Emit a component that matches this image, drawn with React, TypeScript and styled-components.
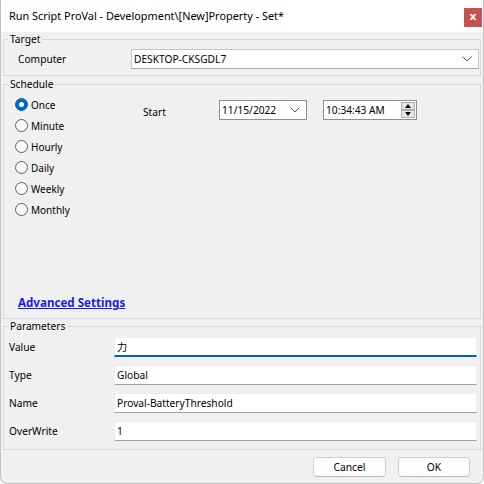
import React from 'react';
import styled, { createGlobalStyle } from 'styled-components';

const Global = createGlobalStyle`
  html, body { margin: 0; padding: 0; background: #ffffff; }
  body { font-family: "Noto Sans", "Segoe UI", sans-serif; font-size: 10.2px; color: #000; }
  * { box-sizing: border-box; }
`;

const Window = styled.div`
  width: 484px;
  height: 484px;
  display: flex;
  flex-direction: column;
  background: #f0f0f0;
  border: 1px solid #c2c2c2;
  border-top: none;
  border-radius: 0 0 7px 7px;
  overflow: hidden;
`;

const TitleBar = styled.div`
  height: 32px;
  flex: none;
  background: #ffffff;
  display: flex;
  align-items: center;
  justify-content: space-between;
  padding-left: 8px;
  padding-right: 1px;
`;

const Title = styled.span`
  font-size: 10.9px;
  line-height: 16px;
  color: #000;
`;

const CloseButton = styled.div`
  width: 18px;
  height: 19px;
  margin-top: 3px;
  background: #c75050;
  color: #fff;
  font-weight: bold;
  font-size: 11px;
  line-height: 17px;
  text-align: center;
  font-family: "DejaVu Sans", sans-serif;
`;

const Body = styled.div`
  flex: 1;
  display: flex;
  flex-direction: column;
  padding: 0 2px;
`;

const Group = styled.fieldset<{ $h: number; $mt?: number }>`
  margin: ${p => p.$mt ?? 0}px 0 0 0;
  padding: 0;
  border: 1px solid #d9d9d9;
  height: ${p => p.$h}px;
  min-width: 0;
  flex: none;
`;

const Legend = styled.legend`
  margin-left: 4px;
  padding: 0 2px;
  font-size: 10.2px;
  line-height: 14px;
  color: #000;
`;

const TargetRow = styled.div`
  display: grid;
  grid-template-columns: 113px 1fr;
  align-items: center;
  padding: 3px 1px 0 14px;
`;

const FieldLabel = styled.span`
  font-size: 10.2px;
  line-height: 16px;
`;

const Combo = styled.div`
  height: 20px;
  background: #fff;
  border: 1px solid #c4c4c4;
  border-bottom-color: #a9a9a9;
  display: flex;
  align-items: center;
  justify-content: space-between;
  padding: 0 6px 0 2px;
  font-size: 10.2px;
`;

const Chevron = () => (
  <svg width="10" height="6" viewBox="0 0 10 6">
    <polyline points="0.5,0.5 5,5 9.5,0.5" fill="none" stroke="#555" strokeWidth="1" />
  </svg>
);

const ScheduleInner = styled.div<{ $h: number }>`
  height: ${p => p.$h}px;
  display: flex;
  flex-direction: column;
  padding: 3px 0 7px 11px;
`;

const ScheduleTop = styled.div`
  display: flex;
  align-items: flex-start;
`;

const RadioList = styled.div`
  width: 128px;
  display: flex;
  flex-direction: column;
`;

const RadioRow = styled.label`
  height: 21px;
  display: flex;
  align-items: center;
  gap: 3px;
  font-size: 10px;
`;

const RadioDot = styled.span<{ $on?: boolean }>`
  width: 13px;
  height: 13px;
  border-radius: 50%;
  flex: none;
  display: flex;
  align-items: center;
  justify-content: center;
  background: ${p => (p.$on ? '#0067c0' : '#f8f8f8')};
  border: 1px solid ${p => (p.$on ? '#0067c0' : '#5f5f5f')};
  &::after {
    content: '';
    display: ${p => (p.$on ? 'block' : 'none')};
    width: 5px;
    height: 5px;
    border-radius: 50%;
    background: #fff;
  }
`;

const StartLabel = styled.span`
  width: 76px;
  margin-top: 10px;
  font-size: 10.2px;
  line-height: 16px;
`;

const Picker = styled.div<{ $w: number; $ml?: number }>`
  width: ${p => p.$w}px;
  margin-left: ${p => p.$ml ?? 0}px;
  margin-top: 6px;
  height: 20px;
  background: #fff;
  border: 1px solid #8f8f8f;
  display: flex;
  align-items: center;
  justify-content: space-between;
  padding: 0 6px 0 2px;
  font-size: 10.2px;
`;

const Spinner = styled.div`
  display: flex;
  flex-direction: column;
  margin-right: -5px;
`;

const SpinButton = styled.div`
  width: 14px;
  height: 8px;
  background: #e6e6e6;
  border: 1px solid #adadad;
  display: flex;
  align-items: center;
  justify-content: center;
`;

const Advanced = styled.a`
  margin-top: auto;
  margin-left: 3px;
  font-weight: bold;
  font-size: 11.6px;
  line-height: 16px;
  color: #1a1aee;
  text-decoration: underline;
  cursor: pointer;
`;

const ParamGrid = styled.div`
  display: grid;
  grid-template-columns: 105px 1fr;
  row-gap: 8px;
  align-items: center;
  padding: 4px 3px 0 5px;
`;

const TextBox = styled.div<{ $focus?: boolean }>`
  height: 20px;
  background: #fff;
  border: 1px solid #ececec;
  border-bottom: ${p => (p.$focus ? '2px solid #005fb8' : '1px solid #a0a0a0')};
  display: flex;
  align-items: center;
  padding: 0 2px;
  font-size: 10.2px;
  font-family: "Noto Sans", "Noto Sans CJK JP", sans-serif;
`;

const Footer = styled.div`
  flex: 1;
  display: flex;
  justify-content: flex-end;
  align-items: flex-start;
  gap: 12px;
  padding: 7px 11px 0 0;
`;

const Button = styled.div<{ $w: number }>`
  width: ${p => p.$w}px;
  height: 20px;
  background: #fdfdfd;
  border: 1px solid #d0d0d0;
  border-bottom-color: #b9b9b9;
  border-radius: 4px;
  display: flex;
  align-items: center;
  justify-content: center;
  font-size: 10.3px;
`;

const radios = ['Once', 'Minute', 'Hourly', 'Daily', 'Weekly', 'Monthly'];
const params: { label: string; value: string; focus?: boolean }[] = [
  { label: 'Value', value: '力', focus: true },
  { label: 'Type', value: 'Global' },
  { label: 'Name', value: 'Proval-BatteryThreshold' },
  { label: 'OverWrite', value: '1' },
];

export default function App() {
  return (
    <>
      <Global />
      <Window>
        <TitleBar>
          <Title>Run Script ProVal - Development\[New]Property - Set*</Title>
          <CloseButton>x</CloseButton>
        </TitleBar>
        <Body>
          <Group $h={44}>
            <Legend>Target</Legend>
            <TargetRow>
              <FieldLabel>Computer</FieldLabel>
              <Combo>
                <span>DESKTOP-CKSGDL7</span>
                <Chevron />
              </Combo>
            </TargetRow>
          </Group>
          <Group $h={242} $mt={1}>
            <Legend>Schedule</Legend>
            <ScheduleInner $h={227}>
              <ScheduleTop>
                <RadioList>
                  {radios.map((r, i) => (
                    <RadioRow key={r}>
                      <RadioDot $on={i === 0} />
                      {r}
                    </RadioRow>
                  ))}
                </RadioList>
                <StartLabel>Start</StartLabel>
                <Picker $w={88}>
                  <span>11/15/2022</span>
                  <Chevron />
                </Picker>
                <Picker $w={94} $ml={16}>
                  <span>10:34:43 AM</span>
                  <Spinner>
                    <SpinButton>
                      <svg width="6" height="4" viewBox="0 0 6 4"><polygon points="0,4 3,0 6,4" fill="#000" /></svg>
                    </SpinButton>
                    <SpinButton>
                      <svg width="6" height="4" viewBox="0 0 6 4"><polygon points="0,0 6,0 3,4" fill="#000" /></svg>
                    </SpinButton>
                  </Spinner>
                </Picker>
              </ScheduleTop>
              <Advanced>Advanced Settings</Advanced>
            </ScheduleInner>
          </Group>
          <Group $h={131}>
            <Legend>Parameters</Legend>
            <ParamGrid>
              {params.map(p => (
                <React.Fragment key={p.label}>
                  <FieldLabel>{p.label}</FieldLabel>
                  <TextBox $focus={p.focus}>{p.value}</TextBox>
                </React.Fragment>
              ))}
            </ParamGrid>
          </Group>
          <Footer>
            <Button $w={73}>Cancel</Button>
            <Button $w={72}>OK</Button>
          </Footer>
        </Body>
      </Window>
    </>
  );
}
